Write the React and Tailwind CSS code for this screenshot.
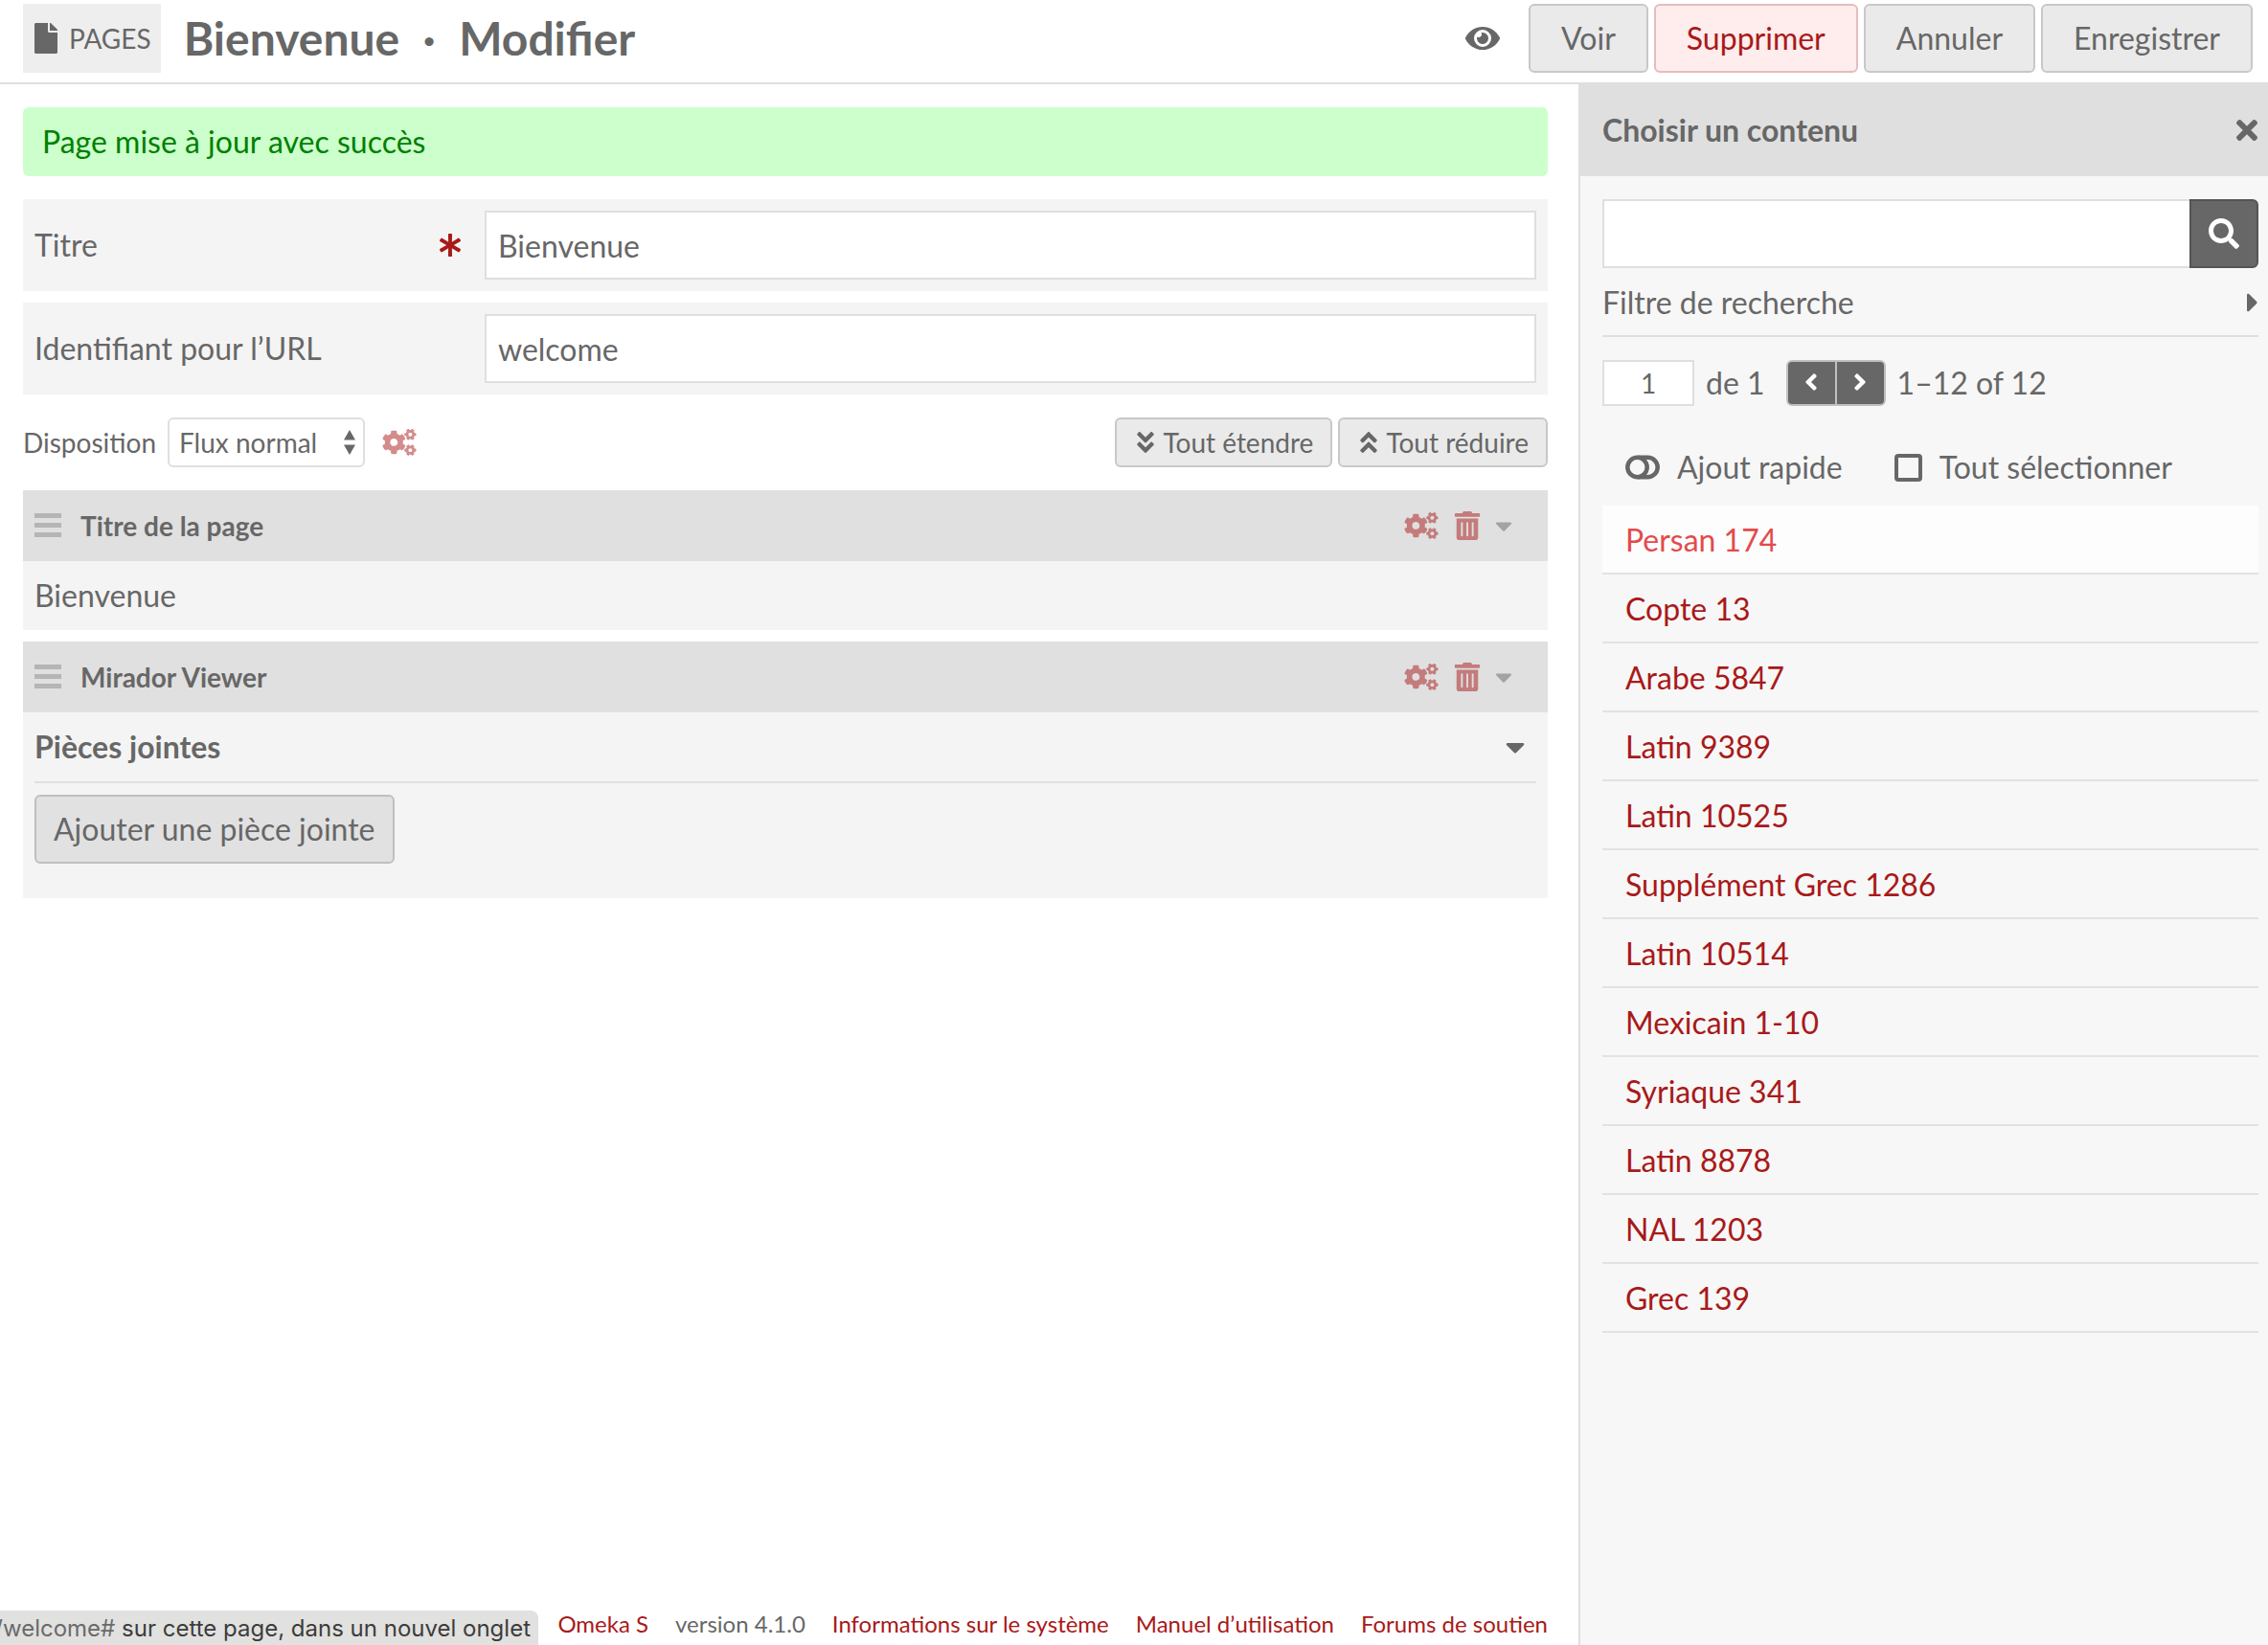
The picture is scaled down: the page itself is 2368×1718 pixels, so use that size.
import { useState } from "react";
import {
  FaAngleDoubleDown,
  FaAngleDoubleUp,
  FaAngleLeft,
  FaAngleRight,
  FaAsterisk,
  FaCaretDown,
  FaCaretRight,
  FaCogs,
  FaEye,
  FaFile,
  FaSearch,
  FaTimes,
  FaTrashAlt,
} from "react-icons/fa";

const items = [
  "Persan 174",
  "Copte 13",
  "Arabe 5847",
  "Latin 9389",
  "Latin 10525",
  "Supplément Grec 1286",
  "Latin 10514",
  "Mexicain 1-10",
  "Syriaque 341",
  "Latin 8878",
  "NAL 1203",
  "Grec 139",
];

function HeaderButton({ children, danger }) {
  return (
    <button
      type="button"
      className={
        danger
          ? "h-[72px] rounded-md border-2 border-[#e6bcbc] bg-[#ffecec] px-8 text-[#a91919]"
          : "h-[72px] rounded-md border-2 border-[#c8c8c8] bg-[#eaeaea] px-8"
      }
    >
      {children}
    </button>
  );
}

function Header() {
  return (
    <header className="flex h-[88px] items-start justify-between border-b-2 border-[#dfdfdf] pt-1 pr-4 pl-6">
      <div className="flex items-center gap-6">
        <a href="#pages" className="flex h-[72px] items-center gap-3 bg-[#eee] pr-[10px] pl-3 text-[28px]">
          <FaFile className="h-8 w-6" />
          PAGES
        </a>
        <h1 className="flex items-center text-[48px] leading-[72px] font-bold">
          <span>Bienvenue</span>
          <span className="w-[62px] text-center">·</span>
          <span>Modifier</span>
        </h1>
      </div>
      <div className="flex items-center gap-[6px]">
        <button type="button" aria-label="Visibilité" className="mr-5 p-1">
          <FaEye className="h-8 w-9" />
        </button>
        <HeaderButton>Voir</HeaderButton>
        <HeaderButton danger>Supprimer</HeaderButton>
        <HeaderButton>Annuler</HeaderButton>
        <HeaderButton>Enregistrer</HeaderButton>
      </div>
    </header>
  );
}

function Field({ id, label, value, required }) {
  return (
    <div className="mb-3 flex items-center bg-[#f4f4f4] p-3">
      <div className="flex w-[470px] shrink-0 items-center justify-between pr-6">
        <label htmlFor={id}>{label}</label>
        {required && <FaAsterisk className="size-6 text-[#a91919]" />}
      </div>
      <input
        id={id}
        type="text"
        defaultValue={value}
        className="h-[72px] min-w-0 flex-1 border-2 border-[#dfdfdf] bg-white px-3 outline-none"
      />
    </div>
  );
}

function SmallButton({ icon: Icon, children }) {
  return (
    <button
      type="button"
      className="flex h-[52px] items-center gap-1 rounded-md border-2 border-[#c8c8c8] bg-[#eaeaea] pr-[18px] pl-4 text-[28px]"
    >
      <Icon className="size-7" />
      {children}
    </button>
  );
}

function LayoutBar() {
  return (
    <div className="mt-6 mb-6 flex items-center justify-between text-[28px]">
      <div className="flex items-center">
        <label htmlFor="layout" className="mr-3">
          Disposition
        </label>
        <div className="relative">
          <select
            id="layout"
            className="h-[52px] w-[206px] appearance-none rounded-md border-2 border-[#dfdfdf] bg-white pl-[10px]"
          >
            <option>Flux normal</option>
          </select>
          <svg viewBox="0 0 12 26" className="pointer-events-none absolute top-[13px] right-[10px] h-[26px] w-3 fill-current">
            <path d="M6 0 12 10.500H0zM6 26 0 15.500h12z" />
          </svg>
        </div>
        <button type="button" aria-label="Configurer la disposition" className="ml-[18px] text-[#a91919] opacity-50">
          <FaCogs className="h-7 w-9" />
        </button>
      </div>
      <div className="flex gap-[6px]">
        <SmallButton icon={FaAngleDoubleDown}>Tout étendre</SmallButton>
        <SmallButton icon={FaAngleDoubleUp}>Tout réduire</SmallButton>
      </div>
    </div>
  );
}

function Block({ title, children }) {
  return (
    <section className="mb-3 bg-[#f4f4f4]">
      <div className="flex h-[74px] items-center bg-[#e0e0e0] pr-9 pl-3 text-[28px]">
        <svg viewBox="0 0 28 26" className="mr-5 h-[26px] w-7 fill-[#b5b5b5]">
          <path d="M0 0h28v5H0zM0 10h28v5H0zM0 20h28v5H0z" />
        </svg>
        <h2 className="font-bold">{title}</h2>
        <div className="ml-auto flex items-center">
          <button type="button" aria-label="Configurer le bloc" className="text-[#a91919] opacity-50">
            <FaCogs className="h-7 w-9" />
          </button>
          <button type="button" aria-label="Supprimer le bloc" className="ml-4 text-[#a91919] opacity-50">
            <FaTrashAlt className="h-[30px] w-7" />
          </button>
          <button type="button" aria-label="Réduire le bloc" className="ml-[14px] opacity-50">
            <FaCaretDown className="h-7 w-5" />
          </button>
        </div>
      </div>
      {children}
    </section>
  );
}

function Attachments() {
  return (
    <div className="px-3 pb-9">
      <div className="flex h-[74px] items-center justify-between border-b-2 border-[#dfdfdf] pr-3">
        <h3 className="font-bold">Pièces jointes</h3>
        <button type="button" aria-label="Réduire les pièces jointes">
          <FaCaretDown className="h-8 w-5" />
        </button>
      </div>
      <button type="button" className="mt-3 h-[72px] rounded-md border-2 border-[#bfbfbf] bg-[#e1e1e1] px-[18px]">
        Ajouter une pièce jointe
      </button>
    </div>
  );
}

function Footer() {
  return (
    <footer className="mt-auto flex items-end justify-between">
      <div className="flex h-9 w-[562px] justify-end overflow-hidden rounded-tr-lg bg-[#e1e1df] pr-2 font-['Inter',sans-serif] text-[24px] leading-[38px] whitespace-pre text-[#3c3c3c]">
        <span className="text-[#6a6a6a]">/welcome#</span>
        <span> sur cette page, dans un nouvel onglet</span>
      </div>
      <nav className="flex gap-7 pr-8 pb-[2px] text-[24px] leading-10 text-[#a91919]">
        <a href="#omeka">Omeka S</a>
        <span className="text-[#676767]">version 4.1.0</span>
        <a href="#system">Informations sur le système</a>
        <a href="#manual">Manuel d’utilisation</a>
        <a href="#forums">Forums de soutien</a>
      </nav>
    </footer>
  );
}

function Sidebar() {
  const [quick, setQuick] = useState(false);
  return (
    <aside className="-mt-[2px] flex w-[720px] shrink-0 flex-col border-l-2 border-[#dfdfdf] bg-[#f7f7f7]">
      <div className="flex h-[98px] items-center justify-between bg-[#dfdfdf] pt-[2px] pr-2 pl-[23px]">
        <h3 className="font-bold">Choisir un contenu</h3>
        <button type="button" aria-label="Fermer">
          <FaTimes className="h-8 w-7" />
        </button>
      </div>
      <div className="pt-6 pr-[10px] pl-[23px]">
        <form className="flex" onSubmit={(e) => e.preventDefault()}>
          <input
            type="text"
            aria-label="Rechercher"
            className="h-[72px] min-w-0 flex-1 border-2 border-r-0 border-[#dfdfdf] bg-white px-3 outline-none"
          />
          <button
            type="submit"
            aria-label="Lancer la recherche"
            className="flex h-[72px] w-[72px] items-center justify-center rounded-r-md border-2 border-[#555] bg-[#676767] text-white"
          >
            <FaSearch className="size-8" />
          </button>
        </form>
        <button
          type="button"
          className="flex h-[72px] w-full items-center justify-between border-b-2 border-[#dfdfdf] pt-[2px] text-left"
        >
          Filtre de recherche
          <FaCaretRight className="h-8 w-3" />
        </button>
        <div className="mt-6 flex items-center">
          <input
            type="text"
            aria-label="Page"
            defaultValue="1"
            className="h-12 w-24 border-2 border-[#dfdfdf] bg-white text-center text-[28px] outline-none"
          />
          <span className="ml-3">de 1</span>
          <div className="mr-3 ml-[22px] flex h-12 w-[104px] rounded-md border-2 border-[#c0c0c0] bg-[#676767] text-white">
            <button type="button" aria-label="Page précédente" className="flex flex-1 items-center justify-center border-r-2 border-[#c0c0c0] pb-[2px]">
              <FaAngleLeft className="size-7" />
            </button>
            <button type="button" aria-label="Page suivante" className="flex flex-1 items-center justify-center pb-[2px]">
              <FaAngleRight className="size-7" />
            </button>
          </div>
          <span>1–12 of 12</span>
        </div>
        <div className="mt-6 flex h-20 items-center pl-6">
          <button
            type="button"
            aria-pressed={quick}
            onClick={() => setQuick(!quick)}
            className="flex items-center gap-[18px]"
          >
            <svg viewBox="0 0 36 26" className="h-[26px] w-9 fill-none stroke-current stroke-[4.5]">
              <circle cx="12.500" cy="13" r="10.200" />
              <path d="M13 2.800h10.500a10.200 10.200 0 0 1 0 20.400H13" />
            </svg>
            Ajout rapide
          </button>
          <label className="ml-[54px] flex items-center gap-[18px]">
            <input type="checkbox" className="size-[29px] appearance-none rounded-[4px] border-4 border-[#676767]" />
            Tout sélectionner
          </label>
        </div>
        <ul>
          {items.map((name, i) => (
            <li
              key={name}
              className={
                i === 0
                  ? "flex h-[72px] items-center border-b-2 border-[#e2e2e2] bg-[#fdfdfd] pt-[2px] pl-6 text-[#e34b4b]"
                  : "flex h-[72px] items-center border-b-2 border-[#e2e2e2] pt-[2px] pl-6 text-[#a91919]"
              }
            >
              <a href="#item">{name}</a>
            </li>
          ))}
        </ul>
      </div>
    </aside>
  );
}

export default function App() {
  return (
    <div className="flex min-h-screen flex-col bg-white font-['Lato',sans-serif] text-[32px] leading-[48px] text-[#676767]">
      <Header />
      <div className="flex flex-1">
        <div className="flex min-w-0 flex-1 flex-col">
          <main className="pt-6 pr-8 pl-6">
            <p className="mb-6 rounded-md bg-[#cfc] px-5 py-3 text-[#008000]">Page mise à jour avec succès</p>
            <Field id="title" label="Titre" value="Bienvenue" required />
            <Field id="slug" label="Identifiant pour l’URL" value="welcome" />
            <LayoutBar />
            <Block title="Titre de la page">
              <p className="p-3">Bienvenue</p>
            </Block>
            <Block title="Mirador Viewer">
              <Attachments />
            </Block>
          </main>
          <Footer />
        </div>
        <Sidebar />
      </div>
    </div>
  );
}
